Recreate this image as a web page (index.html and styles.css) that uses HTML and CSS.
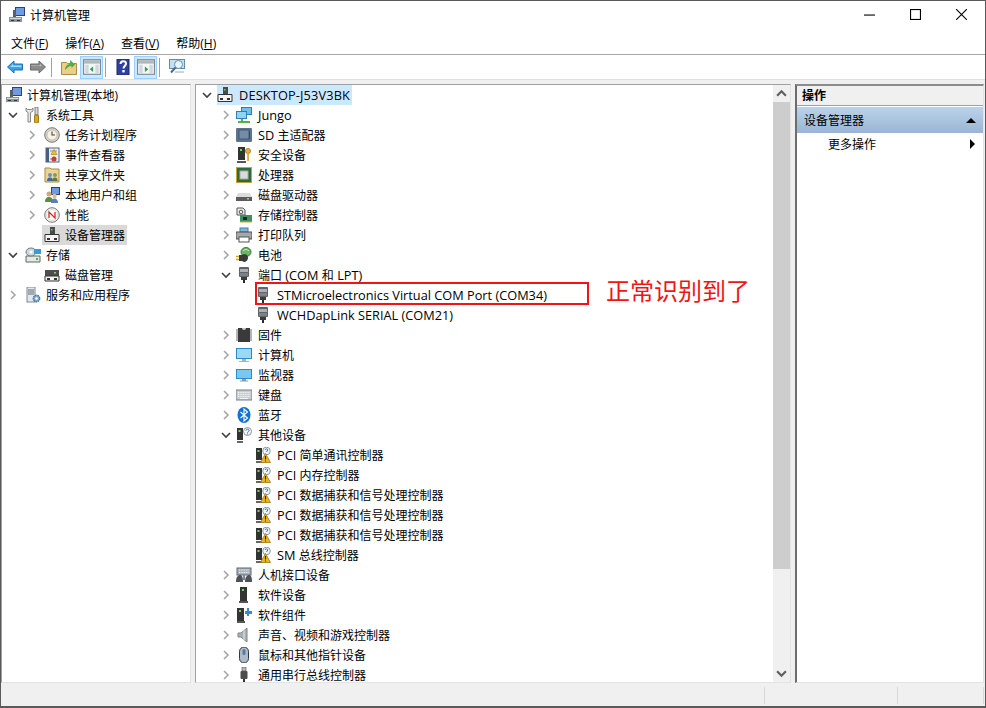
FILE: index.html
```html
<!DOCTYPE html>
<html>
<head>
  <title>计算机管理</title>
  <meta charset="utf-8">
  <link rel="stylesheet" href="styles.css">
</head>
<body>
<svg class="defs" width="0" height="0">
  <symbol id="chev-r" viewBox="0 0 10 10"><path d="M3 1l4 4-4 4" fill="none" stroke="#a6a6a6" stroke-width="1.6"/></symbol>
  <symbol id="chev-d" viewBox="0 0 10 10"><path d="M1 3l4 4 4-4" fill="none" stroke="#404040" stroke-width="1.6"/></symbol>

  <symbol id="back" viewBox="0 0 16 16"><path d="M.5 8L7 2v3h8.500v6H7v3z" fill="#35a3e8" stroke="#1f6fb5"/><path d="M3 8l3-3v1.500h8.500V8H5z" fill="#a5dcfa"/></symbol>
  <symbol id="forward" viewBox="0 0 16 16"><path d="M15.500 8L9 2v3H.5v6H9v3z" fill="#8c8c8c" stroke="#6b6b6b"/><path d="M1.500 6.500H10V5l2 2H1.500z" fill="#c4c4c4"/></symbol>
  <symbol id="folder-up" viewBox="0 0 16 16"><path d="M.5 3.500h5l1 1h9v11H.5z" fill="#e9cf8a" stroke="#a88b45"/><path d="M4 11c0-3 2-6 5-6V1l5 4.500L10.500 9V7C8 7 6 9 4 11z" fill="#4fae3c"/></symbol>
  <symbol id="pane-left" viewBox="0 0 16 16"><rect x=".5" y="1.500" width="15" height="13" fill="#f6f6f6" stroke="#7d8a94"/><rect x="1" y="2" width="14" height="3" fill="#aeb8c0"/><rect x="2" y="6" width="3" height="8" fill="#cfd8de"/><rect x="11" y="6" width="3" height="8" fill="#cfd8de"/><path d="M9 7.500v5L6 10z" fill="#2f9e44"/></symbol>
  <symbol id="pane-right" viewBox="0 0 16 16"><rect x=".5" y="1.500" width="15" height="13" fill="#f6f6f6" stroke="#7d8a94"/><rect x="1" y="2" width="14" height="3" fill="#aeb8c0"/><rect x="2" y="6" width="3" height="8" fill="#cfd8de"/><rect x="11" y="6" width="3" height="8" fill="#cfd8de"/><path d="M7 7.500v5l3-2.500z" fill="#2f9e44"/></symbol>
  <symbol id="help" viewBox="0 0 16 16"><rect x="2" y="0" width="12" height="16" fill="#2f3f9e" stroke="#1d2a70"/><path d="M5.500 5c0-4 5.500-3.500 5.500-.5 0 2.500-2.500 2.500-2.500 5" fill="none" stroke="#fff" stroke-width="2"/><rect x="7.300" y="11" width="2.400" height="2.400" fill="#fff"/></symbol>
  <symbol id="scope" viewBox="0 0 16 16"><rect x=".5" y=".5" width="15" height="9" fill="#bfe2f5" stroke="#5f8cab"/><circle cx="9.500" cy="5.500" r="4" fill="#e8f6fc" stroke="#6d8da3"/><path d="M6.500 8.500L2 13.500" stroke="#4d6a80" stroke-width="2"/><path d="M6 13h9" stroke="#9aaab5"/></symbol>

  <symbol id="mmc" viewBox="0 0 16 16"><rect x="6" y="0" width="10" height="9" fill="#2c3f86"/><rect x="7" y="1" width="8" height="7" fill="#6f9be0"/><rect x="4" y="3" width="3" height="7" fill="#55606b"/><path d="M0 10h13v5H0z" fill="#8b949c"/><path d="M1 11h11v1H1z" fill="#d5dade"/><rect x="2" y="13" width="3" height="1" fill="#333"/><rect x="8" y="13" width="3" height="1" fill="#333"/></symbol>
  <symbol id="tools" viewBox="0 0 16 16"><path d="M1 1v3l2 1.500V15h2.500V5.500L8 4V1L6.500 2.500H2.500z" fill="#e8e8e8" stroke="#6a6a6a" stroke-width=".8"/><rect x="10" y="0" width="3" height="8" fill="#d8d8d8" stroke="#666" stroke-width=".8"/><rect x="9.500" y="8" width="4" height="8" rx="1" fill="#e0a415" stroke="#8a6408" stroke-width=".8"/></symbol>
  <symbol id="clock" viewBox="0 0 16 16"><circle cx="8" cy="8" r="7.300" fill="#d9d4c4" stroke="#777"/><circle cx="8" cy="8" r="5" fill="#f7f3e3" stroke="#aaa" stroke-width=".6"/><path d="M8 4.500V8h3" fill="none" stroke="#444" stroke-width="1.100"/></symbol>
  <symbol id="event" viewBox="0 0 16 16"><rect x="2" y="1" width="13" height="14" fill="#e9edf5" stroke="#54657d"/><rect x="2" y="1" width="3" height="14" fill="#4c5f80"/><path d="M6 4h7M6 12h3" stroke="#8895a8"/><path d="M10 2.500l3 5H7z" fill="#f2c21a" stroke="#a87f08" stroke-width=".6"/><circle cx="10" cy="12" r="2.500" fill="#c93a32"/></symbol>
  <symbol id="share" viewBox="0 0 16 16"><path d="M1 1h5l1 1h8v13H1z" fill="#ecd594" stroke="#a88b45"/><circle cx="6" cy="8" r="2" fill="#6d8fbf"/><path d="M3 14c0-3 1.500-3.500 3-3.500S9 11 9 14z" fill="#44699c"/><circle cx="11" cy="8" r="2" fill="#8a9a55"/><path d="M8.500 14c0-3 1-3.500 2.500-3.500s2.500 .5 2.500 3.500z" fill="#5f7a3a"/></symbol>
  <symbol id="users" viewBox="0 0 16 16"><rect x="7" y="0" width="9" height="8" fill="#2c3f86"/><rect x="8" y="1" width="7" height="6" fill="#6f9be0"/><circle cx="5" cy="7" r="2.500" fill="#d3a77a"/><path d="M1 15c0-4 2-5 4-5s4 1 4 5z" fill="#5d8c46"/><circle cx="10.500" cy="9" r="2.200" fill="#e0bb93"/><path d="M7 16c0-3 1.500-4.500 3.500-4.500S14 13 14 16z" fill="#5b7fb5"/></symbol>
  <symbol id="perf" viewBox="0 0 16 16"><circle cx="8" cy="8" r="7.300" fill="#f4f4f0" stroke="#777"/><circle cx="8" cy="8" r="5.500" fill="#fff" stroke="#c8c8c8" stroke-width=".6"/><path d="M5 11V5l6 6V5" fill="none" stroke="#cc2a24" stroke-width="1.300"/></symbol>
  <symbol id="devmgr" viewBox="0 0 16 16"><rect x="6" y="0" width="5" height="7" fill="#4a4a4a"/><rect x="7" y="2" width="1.500" height="1.500" fill="#5fd35f"/><path d="M1 7.500h14v7H1z" fill="#f4f4f4" stroke="#333"/><rect x="3" y="11" width="3" height="2" fill="#333"/><rect x="10" y="11" width="3" height="2" fill="#333"/></symbol>
  <symbol id="storage" viewBox="0 0 16 16"><path d="M1 9h14v6H1z" fill="#e8e8e8" stroke="#5d6a60"/><rect x="11" y="11" width="2" height="2" fill="#4caf50"/><ellipse cx="6" cy="5" rx="5" ry="4" fill="#d0d6da" stroke="#6d7a80"/><circle cx="6" cy="5" r="1.500" fill="#fff"/><rect x="9" y="2" width="7" height="5" fill="#3d9ad1"/></symbol>
  <symbol id="disk" viewBox="0 0 16 16"><path d="M1 3h14v6H1z" fill="#4d4d4d"/><rect x="10" y="5" width="2" height="1.500" fill="#6fe06f"/><path d="M1 9h14v5H1z" fill="#f2f2f2" stroke="#333"/><rect x="3" y="11" width="3" height="2" fill="#333"/><rect x="10" y="11" width="3" height="2" fill="#333"/></symbol>
  <symbol id="services" viewBox="0 0 16 16"><rect x="2" y="0" width="8" height="15" fill="#e4e8ec" stroke="#7d8a94"/><path d="M3 3h6M3 5h6M3 7h6" stroke="#5a6a78"/><circle cx="11.500" cy="11.500" r="3.300" fill="#7fa8cf" stroke="#446f96" stroke-width="1.200" stroke-dasharray="1.500 .8"/><circle cx="11.500" cy="11.500" r="1.200" fill="#fff"/></symbol>

  <symbol id="network" viewBox="0 0 16 16"><rect x="5" y="0" width="11" height="8" fill="#2f7cb8"/><rect x="6" y="1" width="9" height="6" fill="#6cc0ea"/><rect x="0" y="4" width="11" height="8" fill="#2f7cb8"/><rect x="1" y="5" width="9" height="6" fill="#8dd4f2"/><path d="M2 14h12v2H2z" fill="#55b04a"/><path d="M5 12h2v2H5z" fill="#55b04a"/></symbol>
  <symbol id="sd" viewBox="0 0 16 16"><rect x="0" y="1" width="16" height="14" rx="1" fill="#5b7491"/><rect x="3" y="3" width="10" height="9" fill="#748ca8" stroke="#46586e"/><rect x="13" y="4" width="1" height="8" fill="#3c4b5e"/></symbol>
  <symbol id="security" viewBox="0 0 16 16"><rect x="2" y="0" width="7" height="13" fill="#333"/><rect x="4" y="2" width="2" height="2" fill="#5fe05f"/><path d="M1 14h9v2H1z" fill="#555"/><circle cx="12" cy="4" r="2.600" fill="#e0b040" stroke="#96701a" stroke-width=".7"/><rect x="11.200" y="6" width="1.700" height="8" fill="#d9a62f"/></symbol>
  <symbol id="cpu" viewBox="0 0 16 16"><rect x="0" y="0" width="16" height="16" fill="#c2a53a"/><rect x="1" y="1" width="14" height="14" fill="#2e6b3c"/><rect x="4" y="4" width="8" height="8" fill="#dadada" stroke="#a9a9a9"/></symbol>
  <symbol id="drive" viewBox="0 0 16 16"><path d="M2 6h12l2 4H0z" fill="#dcdcdc"/><rect x="0" y="10" width="16" height="4" fill="#5c5c5c"/><rect x="11" y="11" width="2" height="1.500" fill="#6fe06f"/></symbol>
  <symbol id="ctrl" viewBox="0 0 16 16"><path d="M1 1h6l2 2v5H1z" fill="#eee" stroke="#555"/><circle cx="5" cy="5" r="1.800" fill="none" stroke="#555"/><rect x="4" y="8" width="12" height="7" fill="#3a8f64"/><rect x="7" y="10" width="4" height="3" fill="#222"/><path d="M4 15h12" stroke="#d3b13e"/></symbol>
  <symbol id="printer" viewBox="0 0 16 16"><rect x="4" y="1" width="8" height="4" fill="#78b7e6" stroke="#4f7da3"/><path d="M0 5h16v7H0z" fill="#a8a8a8" stroke="#4f4f4f"/><rect x="3" y="10" width="10" height="5" fill="#fff" stroke="#555"/></symbol>
  <symbol id="battery" viewBox="0 0 16 16"><ellipse cx="10" cy="5" rx="5" ry="4.500" fill="#69b764" stroke="#3c7a3c"/><path d="M7 4c2-2 4-2 6 0" stroke="#d5f0d5" fill="none"/><path d="M3 8h3l2-1c3 0 4 2 4 4s-2 4-4 4l-2-1H3z" fill="#3a3a3a"/><path d="M0 9.500h3M0 12.500h3" stroke="#d3a51f" stroke-width="1.300"/></symbol>
  <symbol id="port" viewBox="0 0 16 16"><rect x="3" y="0" width="10" height="10" rx="1" fill="#5f6469"/><rect x="4" y="2" width="8" height="3" fill="#c9cdd1"/><path d="M5 2v3M7 2v3M9 2v3M11 2v3" stroke="#777" stroke-width=".7"/><rect x="4" y="6" width="8" height="3" fill="#7d8287"/><rect x="5" y="10" width="6" height="3" fill="#3b3b3b"/><rect x="7" y="13" width="2" height="3" fill="#2a2a2a"/></symbol>
  <symbol id="chip" viewBox="0 0 16 16"><rect x="2" y="1" width="12" height="14" fill="#3a3a3a"/><path d="M6 1a2 2 0 0 0 4 0z" fill="#ccc"/><path d="M0 3h2M0 5h2M0 7h2M0 9h2M0 11h2M0 13h2M14 3h2M14 5h2M14 7h2M14 9h2M14 11h2M14 13h2" stroke="#6a6a6a"/></symbol>
  <symbol id="computer" viewBox="0 0 16 16"><rect x="0" y="1" width="16" height="11" fill="#2f8ac9"/><rect x="1" y="2" width="14" height="9" fill="#9adaf5"/><path d="M6 12h4v2h3v1H3v-1h3z" fill="#a7b3bb"/></symbol>
  <symbol id="monitor" viewBox="0 0 16 16"><rect x="0" y="2" width="16" height="10" fill="#2f8ac9"/><rect x="1" y="3" width="14" height="8" fill="#7ac8ee"/><path d="M6 12h4v1.500h2v1H4v-1h2z" fill="#8e9aa3"/></symbol>
  <symbol id="keyboard" viewBox="0 0 16 16"><rect x="0" y="3" width="16" height="10" fill="#c9ced3" stroke="#7a7f85"/><path d="M2 5.500h12M2 7.500h12M2 9.500h12" stroke="#f4f4f4" stroke-dasharray="1 .7"/><path d="M4 11.500h8" stroke="#f4f4f4"/></symbol>
  <symbol id="bluetooth" viewBox="0 0 16 16"><ellipse cx="8" cy="8" rx="6.500" ry="8" fill="#1071d9"/><path d="M4.500 5l7 6L8 14V2l3.500 3-7 6" fill="none" stroke="#fff" stroke-width="1.100"/></symbol>
  <symbol id="other" viewBox="0 0 16 16"><rect x="1" y="1" width="6" height="12" fill="#333"/><rect x="2.500" y="3" width="2" height="2" fill="#5fe05f"/><path d="M1 14h6v2H1z" fill="#666"/><circle cx="11.500" cy="4.500" r="4" fill="#f2f5f8" stroke="#8a97a3"/><path d="M10 3.500c0-1.700 3-1.700 3 0 0 1.200-1.500 1.200-1.500 2.300M11.500 6.500v1" fill="none" stroke="#4b6d96"/></symbol>
  <symbol id="warn" viewBox="0 0 16 16"><rect x="1" y="1" width="6" height="12" fill="#333"/><rect x="2.500" y="3" width="2" height="2" fill="#5fe05f"/><path d="M1 14h6v2H1z" fill="#666"/><circle cx="11.500" cy="4" r="3.800" fill="#f2f5f8" stroke="#8a97a3"/><path d="M10.200 3c0-1.500 2.600-1.500 2.600 0 0 1-1.300 1-1.300 2" fill="none" stroke="#4b6d96"/><path d="M10.500 6.500l5 9h-10z" fill="#f0b41d" stroke="#8f6a0c" stroke-width=".7"/><path d="M10.500 9v3.500M10.500 13.500v1" stroke="#222" stroke-width="1.100"/></symbol>
  <symbol id="hid" viewBox="0 0 16 16"><rect x="1" y="1" width="14" height="7" fill="#aab3bb" stroke="#5e666d"/><path d="M3 3h10M3 5.500h10" stroke="#f0f0f0" stroke-dasharray="1 .7"/><path d="M0 15c0-5 2-7 4-7s3 2 3 7zM9 15c0-5 2-7 4-7s3 2 3 7z" fill="#4d5359"/><path d="M7 8h2v5H7z" fill="#7e8890"/></symbol>
  <symbol id="softdev" viewBox="0 0 16 16"><rect x="4" y="0" width="7" height="14" fill="#333"/><rect x="6" y="2" width="2" height="2" fill="#5fe05f"/><path d="M3 14h9v2H3z" fill="#555"/></symbol>
  <symbol id="softcomp" viewBox="0 0 16 16"><rect x="1" y="1" width="7" height="13" fill="#333"/><rect x="3" y="3" width="2" height="2" fill="#5fe05f"/><path d="M1 14h8v2H1z" fill="#555"/><path d="M9 4h2V1h2v3h3v3h-3v2h-2V7H9z" fill="#3a86d8"/></symbol>
  <symbol id="sound" viewBox="0 0 16 16"><path d="M2 6h3l6-5v14l-6-5H2z" fill="#aab1b8" stroke="#7e858c"/><path d="M8 3v10" stroke="#e4e7ea"/></symbol>
  <symbol id="mouse" viewBox="0 0 16 16"><rect x="3.500" y="0" width="9" height="16" rx="4.500" fill="#aebbc8" stroke="#2c3740"/><rect x="6.500" y="2" width="3" height="6" rx="1.500" fill="#5e7a99"/></symbol>
  <symbol id="usb" viewBox="0 0 16 16"><rect x="6" y="0" width="4" height="4" fill="#b5b5b5" stroke="#555" stroke-width=".6"/><rect x="4.500" y="4" width="7" height="8" rx="1" fill="#4d4d4d"/><rect x="7" y="12" width="2" height="4" fill="#333"/></symbol>
</svg>

<div class="window">
  <div class="titlebar">
    <svg class="icon"><use href="#mmc"/></svg>
    <span class="title">计算机管理</span>
    <div class="controls">
      <svg class="ctl" viewBox="0 0 10 10"><path d="M0 5.500h10" stroke="#000"/></svg>
      <svg class="ctl" viewBox="0 0 10 10"><rect x=".5" y=".5" width="9" height="9" fill="none" stroke="#000"/></svg>
      <svg class="ctl" viewBox="0 0 10 10"><path d="M0 0l10 10M10 0L0 10" stroke="#000"/></svg>
    </div>
  </div>

  <div class="menubar">
    <span>文件(<u>F</u>)</span>
    <span>操作(<u>A</u>)</span>
    <span>查看(<u>V</u>)</span>
    <span>帮助(<u>H</u>)</span>
  </div>

  <div class="toolbar">
    <button class="tool"><svg class="icon"><use href="#back"/></svg></button>
    <button class="tool"><svg class="icon"><use href="#forward"/></svg></button>
    <i class="tool-sep"></i>
    <button class="tool"><svg class="icon"><use href="#folder-up"/></svg></button>
    <button class="tool on"><svg class="icon wide"><use href="#pane-left"/></svg></button>
    <i class="tool-sep"></i>
    <button class="tool"><svg class="icon"><use href="#help"/></svg></button>
    <button class="tool on"><svg class="icon wide"><use href="#pane-right"/></svg></button>
    <i class="tool-sep"></i>
    <button class="tool"><svg class="icon"><use href="#scope"/></svg></button>
  </div>

  <div class="panes">
    <ul class="pane tree tree-left">
      <li class="row lv0"><svg class="icon"><use href="#mmc"/></svg><span>计算机管理(本地)</span></li>
      <li class="row lv1"><i class="twisty"><svg><use href="#chev-d"/></svg></i><svg class="icon"><use href="#tools"/></svg><span>系统工具</span></li>
      <li class="row lv2"><i class="twisty"><svg><use href="#chev-r"/></svg></i><svg class="icon"><use href="#clock"/></svg><span>任务计划程序</span></li>
      <li class="row lv2"><i class="twisty"><svg><use href="#chev-r"/></svg></i><svg class="icon"><use href="#event"/></svg><span>事件查看器</span></li>
      <li class="row lv2"><i class="twisty"><svg><use href="#chev-r"/></svg></i><svg class="icon"><use href="#share"/></svg><span>共享文件夹</span></li>
      <li class="row lv2"><i class="twisty"><svg><use href="#chev-r"/></svg></i><svg class="icon"><use href="#users"/></svg><span>本地用户和组</span></li>
      <li class="row lv2"><i class="twisty"><svg><use href="#chev-r"/></svg></i><svg class="icon"><use href="#perf"/></svg><span>性能</span></li>
      <li class="row lv2"><i class="twisty"></i><div class="node current"><svg class="icon"><use href="#devmgr"/></svg><span>设备管理器</span></div></li>
      <li class="row lv1"><i class="twisty"><svg><use href="#chev-d"/></svg></i><svg class="icon"><use href="#storage"/></svg><span>存储</span></li>
      <li class="row lv2"><i class="twisty"></i><svg class="icon"><use href="#disk"/></svg><span>磁盘管理</span></li>
      <li class="row lv1"><i class="twisty"><svg><use href="#chev-r"/></svg></i><svg class="icon"><use href="#services"/></svg><span>服务和应用程序</span></li>
    </ul>

    <div class="pane center">
      <ul class="tree tree-main">
        <li class="row lv0"><i class="twisty"><svg><use href="#chev-d"/></svg></i><div class="node selected"><svg class="icon"><use href="#devmgr"/></svg><span class="en host">DESKTOP-J53V3BK</span></div></li>
        <li class="row lv1"><i class="twisty"><svg><use href="#chev-r"/></svg></i><svg class="icon"><use href="#network"/></svg><span class="en">Jungo</span></li>
        <li class="row lv1"><i class="twisty"><svg><use href="#chev-r"/></svg></i><svg class="icon"><use href="#sd"/></svg><span><b class="en">SD </b>主适配器</span></li>
        <li class="row lv1"><i class="twisty"><svg><use href="#chev-r"/></svg></i><svg class="icon"><use href="#security"/></svg><span>安全设备</span></li>
        <li class="row lv1"><i class="twisty"><svg><use href="#chev-r"/></svg></i><svg class="icon"><use href="#cpu"/></svg><span>处理器</span></li>
        <li class="row lv1"><i class="twisty"><svg><use href="#chev-r"/></svg></i><svg class="icon"><use href="#drive"/></svg><span>磁盘驱动器</span></li>
        <li class="row lv1"><i class="twisty"><svg><use href="#chev-r"/></svg></i><svg class="icon"><use href="#ctrl"/></svg><span>存储控制器</span></li>
        <li class="row lv1"><i class="twisty"><svg><use href="#chev-r"/></svg></i><svg class="icon"><use href="#printer"/></svg><span>打印队列</span></li>
        <li class="row lv1"><i class="twisty"><svg><use href="#chev-r"/></svg></i><svg class="icon"><use href="#battery"/></svg><span>电池</span></li>
        <li class="row lv1"><i class="twisty"><svg><use href="#chev-d"/></svg></i><svg class="icon"><use href="#port"/></svg><span>端口<b class="en"> (COM </b>和<b class="en"> LPT)</b></span></li>
        <li class="row lv2 marked"><i class="twisty"></i><svg class="icon"><use href="#port"/></svg><span class="en">STMicroelectronics Virtual COM Port (COM34)</span><div class="mark"></div><div class="mark-note">正常识别到了</div></li>
        <li class="row lv2"><i class="twisty"></i><svg class="icon"><use href="#port"/></svg><span class="en">WCHDapLink SERIAL (COM21)</span></li>
        <li class="row lv1"><i class="twisty"><svg><use href="#chev-r"/></svg></i><svg class="icon"><use href="#chip"/></svg><span>固件</span></li>
        <li class="row lv1"><i class="twisty"><svg><use href="#chev-r"/></svg></i><svg class="icon"><use href="#computer"/></svg><span>计算机</span></li>
        <li class="row lv1"><i class="twisty"><svg><use href="#chev-r"/></svg></i><svg class="icon"><use href="#monitor"/></svg><span>监视器</span></li>
        <li class="row lv1"><i class="twisty"><svg><use href="#chev-r"/></svg></i><svg class="icon"><use href="#keyboard"/></svg><span>键盘</span></li>
        <li class="row lv1"><i class="twisty"><svg><use href="#chev-r"/></svg></i><svg class="icon"><use href="#bluetooth"/></svg><span>蓝牙</span></li>
        <li class="row lv1"><i class="twisty"><svg><use href="#chev-d"/></svg></i><svg class="icon"><use href="#other"/></svg><span>其他设备</span></li>
        <li class="row lv2"><i class="twisty"></i><svg class="icon"><use href="#warn"/></svg><span><b class="en">PCI </b>简单通讯控制器</span></li>
        <li class="row lv2"><i class="twisty"></i><svg class="icon"><use href="#warn"/></svg><span><b class="en">PCI </b>内存控制器</span></li>
        <li class="row lv2"><i class="twisty"></i><svg class="icon"><use href="#warn"/></svg><span><b class="en">PCI </b>数据捕获和信号处理控制器</span></li>
        <li class="row lv2"><i class="twisty"></i><svg class="icon"><use href="#warn"/></svg><span><b class="en">PCI </b>数据捕获和信号处理控制器</span></li>
        <li class="row lv2"><i class="twisty"></i><svg class="icon"><use href="#warn"/></svg><span><b class="en">PCI </b>数据捕获和信号处理控制器</span></li>
        <li class="row lv2"><i class="twisty"></i><svg class="icon"><use href="#warn"/></svg><span><b class="en">SM </b>总线控制器</span></li>
        <li class="row lv1"><i class="twisty"><svg><use href="#chev-r"/></svg></i><svg class="icon"><use href="#hid"/></svg><span>人机接口设备</span></li>
        <li class="row lv1"><i class="twisty"><svg><use href="#chev-r"/></svg></i><svg class="icon"><use href="#softdev"/></svg><span>软件设备</span></li>
        <li class="row lv1"><i class="twisty"><svg><use href="#chev-r"/></svg></i><svg class="icon"><use href="#softcomp"/></svg><span>软件组件</span></li>
        <li class="row lv1"><i class="twisty"><svg><use href="#chev-r"/></svg></i><svg class="icon"><use href="#sound"/></svg><span>声音、视频和游戏控制器</span></li>
        <li class="row lv1"><i class="twisty"><svg><use href="#chev-r"/></svg></i><svg class="icon"><use href="#mouse"/></svg><span>鼠标和其他指针设备</span></li>
        <li class="row lv1"><i class="twisty"><svg><use href="#chev-r"/></svg></i><svg class="icon"><use href="#usb"/></svg><span>通用串行总线控制器</span></li>
      </ul>
      <div class="scrollbar">
        <svg class="sb-arrow" viewBox="0 0 10 10"><path d="M1 7l4-4 4 4" fill="none" stroke="#606060" stroke-width="2"/></svg>
        <div class="sb-thumb"></div>
        <svg class="sb-arrow" viewBox="0 0 10 10"><path d="M1 3l4 4 4-4" fill="none" stroke="#606060" stroke-width="2"/></svg>
      </div>
    </div>

    <div class="pane actions">
      <div class="actions-head">操作</div>
      <div class="actions-group"><span>设备管理器</span><i class="tri-up"></i></div>
      <div class="actions-item"><span>更多操作</span><i class="tri-right"></i></div>
    </div>
  </div>

  <div class="statusbar">
    <div class="cell cell-a"></div>
    <div class="cell cell-b"></div>
    <div class="cell cell-c"></div>
  </div>
</div>
</body>
</html>
```

FILE: styles.css
```css
* {
  box-sizing: border-box;
}
body {
  margin: 0;
  font-family: "Open Sans", "Noto Sans CJK SC", sans-serif;
  font-size: 12px;
  color: #000;
}
ul, li {
  margin: 0;
  padding: 0;
  list-style-type: none;
}
.defs {
  position: absolute;
}
.icon {
  width: 16px;
  height: 16px;
  flex: none;
}
.icon.wide {
  width: 18px;
  height: 18px;
}
.en {
  font-size: 12.75px;
  font-weight: normal;
}
.host {
  letter-spacing: .15px;
}

.window {
  width: 986px;
  height: 708px;
  display: flex;
  flex-direction: column;
  border: 1px solid #5a5a5a;
  border-bottom-width: 2px;
  background: #fff;
}

.titlebar {
  height: 29px;
  display: flex;
  align-items: center;
  padding: 0 0 2px 8px;
  flex: none;
}
.title {
  margin-left: 5px;
}
.controls {
  margin-left: auto;
  display: flex;
  gap: 35px;
  padding-right: 18px;
}
.ctl {
  width: 11px;
  height: 11px;
}

.menubar {
  height: 25px;
  flex: none;
  display: flex;
  align-items: center;
  gap: 17px;
  padding: 2px 0 0 10px;
  border-bottom: 1px solid #a8a8a8;
}
.toolbar {
  height: 25px;
  flex: none;
  display: flex;
  align-items: center;
  padding-left: 2px;
  border-bottom: 1px solid #e0e0e0;
}
.tool {
  width: 23px;
  height: 23px;
  padding: 0;
  border: 1px solid transparent;
  background: none;
  display: flex;
  align-items: center;
  justify-content: center;
}
.tool.on {
  background: #cce8ff;
  border-color: #99d1ff;
}
.tool-sep {
  width: 1px;
  height: 19px;
  margin: 0 5px 0 2px;
  background: #a0a0a0;
}

.panes {
  flex: 1;
  min-height: 0;
  display: flex;
  gap: 4px;
  padding: 4px 1px 3px 0;
  background: #f0f0f0;
}
.pane {
  background: #fff;
  border: 1px solid #e3e3e3;
  border-top-color: #a0a0a0;
  border-left-color: #a0a0a0;
  overflow: hidden;
}
.tree-left {
  width: 190px;
  flex: none;
}
.center {
  width: 596px;
  flex: none;
  display: flex;
}
.tree-main {
  flex: 1;
  overflow: hidden;
}
.actions {
  flex: 1;
  border-left: 2px solid #6d6d6d;
  border-top: 2px solid #8c8c8c;
}

.row {
  height: 20px;
  line-height: 16px;
  display: flex;
  align-items: center;
  white-space: nowrap;
}
.row .icon + span {
  margin-left: 5px;
}
.tree-main .row .icon + span {
  margin-left: 6px;
}
/* rows with only chinese text sit 1px high otherwise */
.row span:not(.en):not(:has(.en)) {
  line-height: 14px;
  padding-top: 2px;
}
.twisty {
  width: 19px;
  height: 10px;
  flex: none;
  display: block;
}
.twisty svg {
  display: block;
  width: 10px;
  height: 10px;
  margin-left: 4px;
}
.tree-left .twisty svg {
  margin-left: 2px;
}
.tree-left .lv0 { padding-left: 4px; }
.tree-left .lv1 { padding-left: 4px; }
.tree-left .lv2 { padding-left: 23px; }
.tree-main .lv0 { padding-left: 2px; }
.tree-main .lv1 { padding-left: 21px; }
.tree-main .lv2 { padding-left: 40px; }
.node {
  height: 20px;
  display: flex;
  align-items: center;
  padding-right: 2px;
}
.selected {
  background: #cce8ff;
}
.current {
  background: #d9d9d9;
  margin-left: -2px;
  padding-left: 2px;
}

.marked {
  position: relative;
}
.mark {
  position: absolute;
  left: 59px;
  top: -3px;
  width: 334px;
  height: 23px;
  border: 2px solid #f01414;
}
.mark-note {
  position: absolute;
  left: 410px;
  top: -9px;
  font-size: 24px;
  line-height: 30px;
  color: #f01414;
}

.scrollbar {
  width: 17px;
  flex: none;
  display: flex;
  flex-direction: column;
  background: #f0f0f0;
}
.sb-arrow {
  width: 17px;
  height: 17px;
  flex: none;
  padding: 3px;
}
.sb-thumb {
  height: 467px;
  background: #cdcdcd;
  margin-bottom: auto;
}

.actions-head {
  height: 20px;
  padding-left: 5px;
  line-height: 19px;
  font-weight: 600;
  background: #f0f0f0;
  border-bottom: 1px solid #a0a0a0;
}
.actions-group {
  height: 26px;
  display: flex;
  align-items: center;
  justify-content: space-between;
  padding: 0 7px;
  margin-top: 1px;
  background: linear-gradient(#bbd3ea, #9ab5d3);
}
.actions-item {
  height: 22px;
  display: flex;
  align-items: center;
  justify-content: space-between;
  padding: 0 8px 0 31px;
}
.tri-up {
  border-left: 5px solid transparent;
  border-right: 5px solid transparent;
  border-bottom: 5px solid #000;
}
.tri-right {
  border-top: 5px solid transparent;
  border-bottom: 5px solid transparent;
  border-left: 5px solid #000;
}

.statusbar {
  height: 20px;
  flex: none;
  display: flex;
  padding: 1px 1px 2px 0;
  background: #f0f0f0;
}
.cell {
  border-right: 1px solid #d8d8d8;
}
.cell-a { width: 764px; }
.cell-b { width: 133px; }
.cell-c { flex: 1; }
```
